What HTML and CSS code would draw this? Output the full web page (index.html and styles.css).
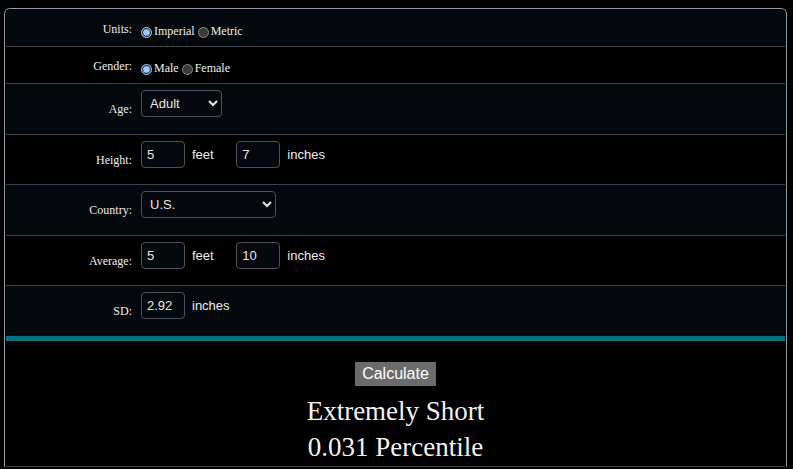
FILE: index.html
```html
<!DOCTYPE html>
<html lang="en">
<head>
  <meta charset="UTF-8">
  <title>Height Percentile Calculator</title>
  <link rel="stylesheet" href="styles.css">
</head>
<body>
  <div class="panel">
    <table class="calc">
      <tr class="odd">
        <td class="label">Units:</td>
        <td class="field radios">
          <label><input type="radio" name="units" checked>Imperial</label>
          <label><input type="radio" name="units">Metric</label>
        </td>
      </tr>
      <tr>
        <td class="label">Gender:</td>
        <td class="field radios">
          <label><input type="radio" name="gender" checked>Male</label>
          <label><input type="radio" name="gender">Female</label>
        </td>
      </tr>
      <tr class="odd">
        <td class="label">Age:</td>
        <td class="field">
          <select class="age">
            <option>Adult</option>
            <option>Child</option>
          </select>
        </td>
      </tr>
      <tr>
        <td class="label">Height:</td>
        <td class="field">
          <input class="num" type="text" value="5"><span class="unit">feet</span>
          <input class="num" type="text" value="7"><span class="unit">inches</span>
        </td>
      </tr>
      <tr class="odd">
        <td class="label">Country:</td>
        <td class="field">
          <select class="country">
            <option>U.S.</option>
            <option>U.K.</option>
          </select>
        </td>
      </tr>
      <tr>
        <td class="label">Average:</td>
        <td class="field">
          <input class="num" type="text" value="5"><span class="unit">feet</span>
          <input class="num" type="text" value="10"><span class="unit">inches</span>
        </td>
      </tr>
      <tr class="odd last">
        <td class="label">SD:</td>
        <td class="field">
          <input class="num" type="text" value="2.92"><span class="unit">inches</span>
        </td>
      </tr>
      <tr class="result">
        <td colspan="2">
          <button class="go">Calculate</button>
          <div class="verdict">Extremely Short</div>
          <div class="verdict">0.031 Percentile</div>
        </td>
      </tr>
    </table>
  </div>
</body>
</html>
```

FILE: styles.css
```css
:root{
  color-scheme: dark;
}
*{
  box-sizing: border-box;
}
body{
  margin: 0;
  background: #000;
  color: #eee;
  font-family: "Liberation Serif", serif;
  font-size: 12px;
}

.panel{
  margin: 8px 6px 0 4px;
  padding: 1px 1px 0;
  border: 1px solid #8e9ca2;
  border-bottom: none;
  border-radius: 6px 6px 0 0;
  background: #000;
}

.calc{
  width: 100%;
  border-collapse: separate;
  border-spacing: 0;
}
.calc td{
  border-bottom: 1px solid #3b4347;
}
.calc tr.odd td{
  background: #05080c;
}
.calc tr.last td{
  border-bottom: none;
}

.label{
  width: 135px;
  padding: 2px 9px 0 0;
  text-align: right;
  vertical-align: middle;
}
.field{
  padding: 6px 0 16.5px;
  vertical-align: top;
  font-family: "Liberation Sans", sans-serif;
  font-size: 13px;
}
.radios{
  padding: 13px 0 7px;
  font-family: "Liberation Serif", serif;
  font-size: 12px;
  line-height: 16px;
}
.radios input{
  width: 11px;
  height: 11px;
  margin: 0 2px 0 0;
  vertical-align: -3px;
}

.num, select{
  height: 27px;
  border: 1px solid #4d5459;
  border-radius: 4px;
  background: #05080c;
  color: #e8e8e8;
  font-family: "Liberation Sans", sans-serif;
  font-size: 13px;
  vertical-align: top;
}
.num{
  width: 44px;
  padding: 0 5px;
}
select{
  padding: 0 4px;
}
.age{
  width: 81px;
}
.country{
  width: 135px;
}
.unit{
  display: inline-block;
  margin: 0 19px 0 7px;
  line-height: 27px;
  vertical-align: top;
}

.result td{
  border-top: 5px solid #017482;
  border-bottom: 1px solid #3b4347;
  padding: 21px 0 1px;
  text-align: center;
  background: #000;
}
.go{
  height: 24px;
  padding: 0 7px;
  border: none;
  border-radius: 0;
  background: #6b6b6b;
  color: #fff;
  font-family: "Liberation Sans", sans-serif;
  font-size: 16px;
}
.verdict{
  font-size: 27px;
  line-height: 36px;
  color: #f2f2f2;
}
.go + .verdict{
  margin-top: 7px;
}
```
